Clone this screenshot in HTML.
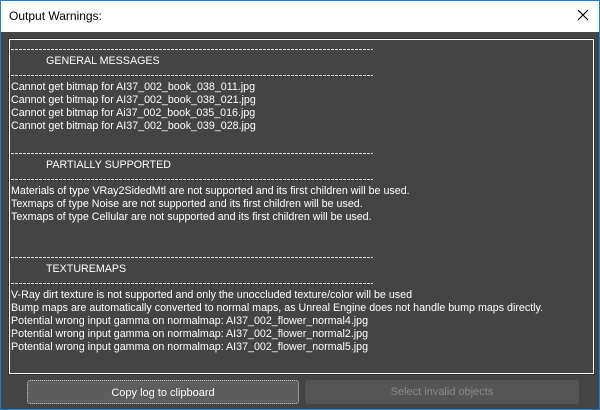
<!DOCTYPE html>
<html><head><style>
*{margin:0;padding:0;box-sizing:border-box}
body{width:600px;height:410px;overflow:hidden;background:#444;font-family:"Liberation Sans",Tahoma,sans-serif;}
.win{position:absolute;left:0;top:0;width:600px;height:410px;border:1px solid #1a7fd4;background:#444}
.title{position:absolute;left:0;top:0;width:598px;height:31px;background:#fff;color:#000;font-size:12px;line-height:31px;padding-left:8px}
.x{position:absolute;right:10px;top:8px}
.box{position:absolute;left:7px;top:37px;width:587px;height:337px;border:1px solid #333}
.inner{position:absolute;left:0;top:0;right:0;bottom:0;border:1px solid #fff;background:#444;padding:2px 0 0 1px;color:#fff;font-size:10.7px;line-height:13px;white-space:pre;overflow:hidden}
.d{width:362px;height:13px;position:relative}
.d::after{content:"";position:absolute;left:0;right:0;top:7px;height:1px;background:repeating-linear-gradient(90deg,#ddd 0 3px,transparent 3px 4px)}
.h{padding-left:35px}
.btn{position:absolute;top:379px;height:24px;border-radius:3px;font-size:11px;line-height:24px;text-align:center}
.b1{left:26px;width:272px;background:#5d5d5d;color:#fff;border:1px dotted #ccc}
.b2{left:304px;width:274px;background:#555;color:#8a8a8a}
</style></head><body><div class="win">
<div class="title">Output Warnings:</div>
<svg class="x" width="12" height="12" viewBox="0 0 12 12"><path d="M1 1L11 11M11 1L1 11" stroke="#000" stroke-width="1.2"/></svg>
<div class="box"><div class="inner"><div class="d"></div><div class="h">GENERAL MESSAGES</div><div class="d"></div><div>Cannot get bitmap for AI37_002_book_038_011.jpg</div><div>Cannot get bitmap for AI37_002_book_038_021.jpg</div><div>Cannot get bitmap for Ai37_002_book_035_016.jpg</div><div>Cannot get bitmap for AI37_002_book_039_028.jpg</div><div> </div><div class="d"></div><div class="h">PARTIALLY SUPPORTED</div><div class="d"></div><div>Materials of type VRay2SidedMtl are not supported and its first children will be used.</div><div>Texmaps of type Noise are not supported and its first children will be used.</div><div>Texmaps of type Cellular are not supported and its first children will be used.</div><div> </div><div> </div><div class="d"></div><div class="h">TEXTUREMAPS</div><div class="d"></div><div>V-Ray dirt texture is not supported and only the unoccluded texture/color will be used</div><div>Bump maps are automatically converted to normal maps, as Unreal Engine does not handle bump maps directly.</div><div>Potential wrong input gamma on normalmap: AI37_002_flower_normal4.jpg</div><div>Potential wrong input gamma on normalmap: AI37_002_flower_normal2.jpg</div><div>Potential wrong input gamma on normalmap: AI37_002_flower_normal5.jpg</div></div></div>
<div class="btn b1">Copy log to clipboard</div>
<div class="btn b2">Select invalid objects</div>
</div></body></html>
